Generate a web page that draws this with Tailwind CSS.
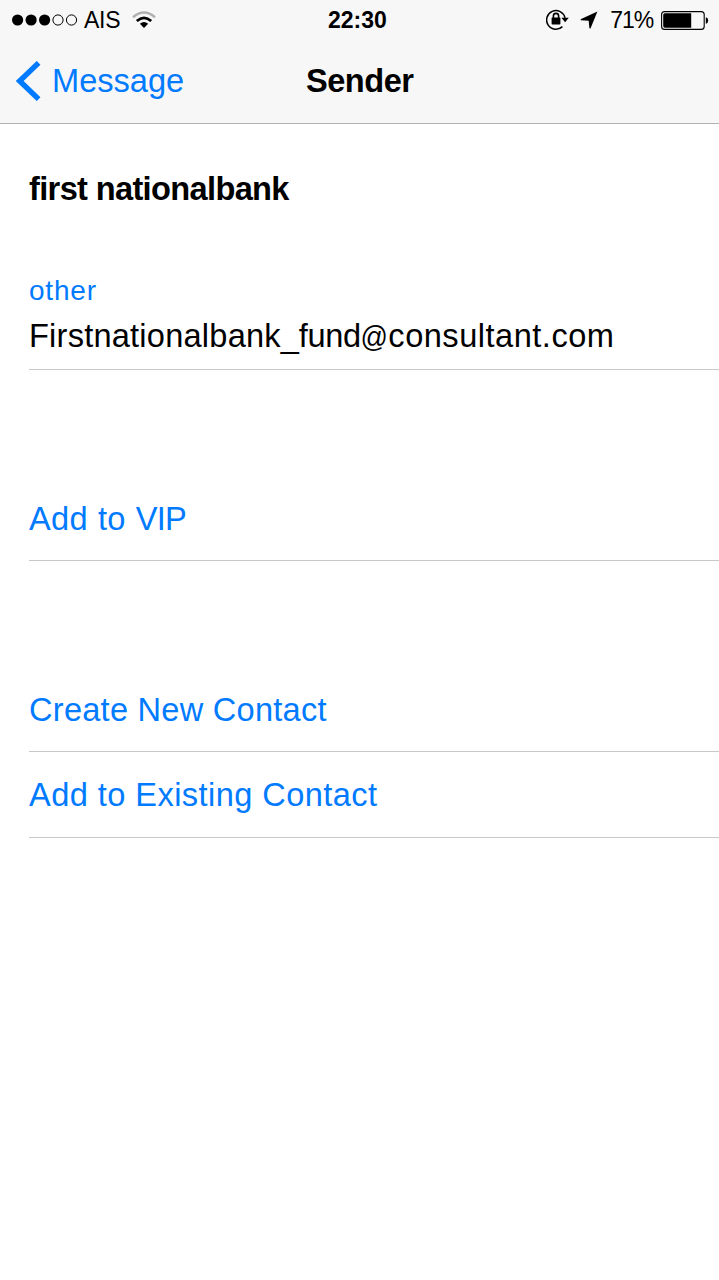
<!DOCTYPE html>
<html lang="en">
<head>
<meta charset="utf-8">
<title>Sender</title>
<script src="https://cdn.jsdelivr.net/npm/@tailwindcss/browser@4"></script>
</head>
<body class="bg-white text-black font-['Liberation_Sans',Arial,sans-serif] text-[32.6px] w-[719px] h-[1280px] overflow-hidden">
<header class="h-[124px] bg-[#f7f7f7] border-b border-[#b2b2b2]">
  <div class="grid grid-cols-[316px_59px_1fr] items-center h-10 text-[23px] leading-10 pl-3 pr-[10px]">
    <div class="flex items-center">
      <svg class="w-[66px] h-3" viewBox="0 0 66 12"><g><circle cx="5.6" cy="6" r="5.6"/><circle cx="19.1" cy="6" r="5.6"/><circle cx="32.6" cy="6" r="5.6"/></g><g fill="none" stroke="#000"><circle cx="46" cy="6" r="5.1"/><circle cx="59.5" cy="6" r="5.1"/></g></svg>
      <span class="ml-[6px] tracking-[-0.3px]">AIS</span>
      <svg class="ml-3 w-6 h-[18px]" viewBox="0 0 24 18" fill="none"><path d="M1 6.2Q12 -3.2 23 6.2" stroke="#b0b0b0" stroke-width="2.5"/><path d="M4.8 10Q12 3.7 19.2 10" stroke="#000" stroke-width="2.8"/><path d="M7.9 12.8Q12 9.4 16.1 12.8L12 17Z" fill="#000"/></svg>
    </div>
    <span class="font-bold">22:30</span>
    <div class="flex items-center justify-end">
      <svg class="w-[23px] h-[22px]" viewBox="0 0 23 22" fill="none"><path d="M16.4 17.6A9.3 9.3 0 1 1 19 8.8" stroke="#000" stroke-width="1.5"/><path d="M15.4 8.8h7.4l-3.7 4.4z" fill="#000"/><rect x="5.6" y="8.4" width="8.8" height="7" rx=".7" fill="#000"/><path d="M7.4 9V7a2.6 2.6 0 0 1 5.2 0v2" stroke="#000" stroke-width="1.6"/></svg>
      <svg class="ml-[11px] w-[18px] h-[18px]" viewBox="0 0 18 18"><path d="M17.4.4 10.5 17.5 9.4 17.2 8.7 9.7.9 9.3.6 8.2Z"/></svg>
      <span class="ml-[12px] tracking-[-1.1px]">71%</span>
      <svg class="ml-2 w-12 h-[19px]" viewBox="0 0 48 19"><rect x=".6" y=".6" width="42.6" height="17.8" rx="3" fill="none" stroke="#000" stroke-width="1.1"/><path d="M4 2.3h26.2v14.4H4a1.8 1.8 0 0 1-1.8-1.8V4.1A1.8 1.8 0 0 1 4 2.3Z"/><path d="M44.8 6.2q2.4.6 2.4 3.3t-2.4 3.3z"/></svg>
    </div>
  </div>
  <div class="grid grid-cols-[290px_auto_1fr] items-center h-[82px] pl-4">
    <div class="flex items-center text-[#007aff]">
      <svg class="w-[25px] h-10" viewBox="0 0 25 40"><path d="M22.6 1.9 3.7 20 22.6 38.1" fill="none" stroke="currentColor" stroke-width="5.4"/></svg>
      <span class="ml-[11px]">Message</span>
    </div>
    <h1 class="font-bold tracking-[-0.5px]">Sender</h1>
  </div>
</header>
<main class="pl-[29px]">
  <h2 class="pt-[41px] font-bold leading-[48px] tracking-[-0.65px]">first nationalbank</h2>
  <section class="mt-[59px] h-[98px] border-b border-[#c8c7cc]">
    <p class="h-[38px] leading-[38px] text-[28px] tracking-[0.8px] text-[#007aff]">other</p>
    <p class="leading-[50px] pt-px whitespace-nowrap"><span class="tracking-[0.22px]">Firstnationalbank</span><span class="tracking-[-0.3px]">_fund</span><span class="inline-block leading-none text-[30px] scale-x-[0.9] -mx-[1.5px]">@</span><span class="tracking-[0.5px]">consultant.com</span></p>
  </section>
  <section class="mt-[105px] h-[86px] border-b border-[#c8c7cc] leading-[88px] tracking-[0.3px] [word-spacing:0.7px] text-[#007aff]">Add to <span class="tracking-[-0.8px]">VIP</span></section>
  <section class="mt-[105px] text-[#007aff]">
    <p class="h-[86px] border-b border-[#c8c7cc] leading-[88px] tracking-[0.25px]">Create New Contact</p>
    <p class="h-[86px] border-b border-[#c8c7cc] leading-[86px] tracking-[0.43px]">Add to Existing Contact</p>
  </section>
</main>
</body>
</html>
